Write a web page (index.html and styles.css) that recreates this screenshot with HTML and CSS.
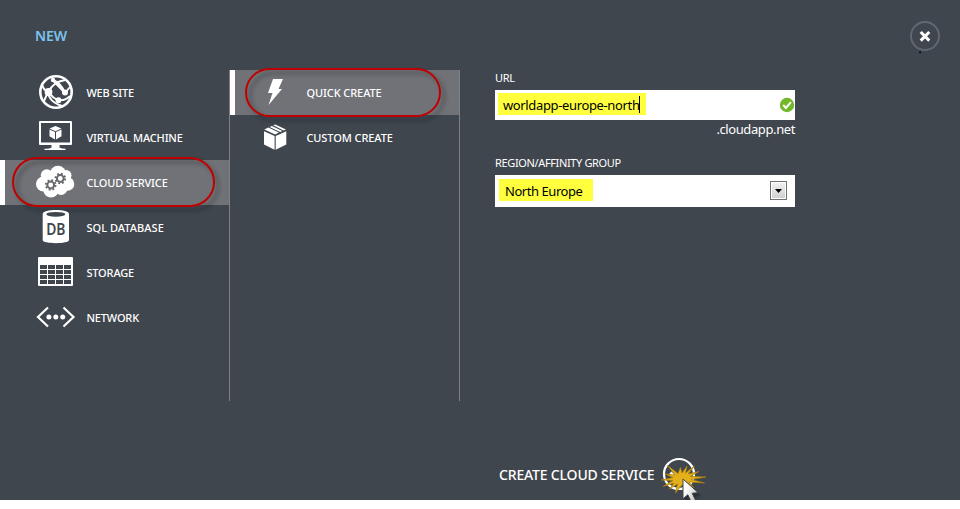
FILE: index.html
```html
<!DOCTYPE html>
<html lang="en">
<head>
<meta charset="utf-8">
<title>New</title>
<link rel="stylesheet" href="styles.css">
</head>
<body>
<main class="panel">
  <header class="head">
    <h1>NEW</h1>
    <button class="close" aria-label="Close"><svg width="32" height="34" viewBox="0 0 32 34"><circle cx="15" cy="16" r="14" fill="none" stroke="#626872" stroke-width="2"/><path d="M10.700 12l8.600 8.600M19.300 12l-8.600 8.600" stroke="#fff" stroke-width="3"/><path d="M9 31.600h2v1.700H9z" fill="#0b0d10"/></svg></button>
  </header>
  <div class="columns">
    <nav class="menu">
      <a class="item"><svg width="50" height="45" viewBox="0 0 50 45" fill="none" stroke="#fff">
        <circle cx="26" cy="22" r="15.700" stroke-width="2.600"/>
        <path d="M12 14Q13 20 18.500 22Q23 12 35 10M22 9.500Q31 13 35 23M18 22Q19 32 32 36M19 22Q23 29 29 30T40 26M22 9.500L35 23M35 23L40 17M18 22L14 31" stroke-width="1.900"/>
        <g fill="#fff" stroke="none"><circle cx="18.500" cy="22" r="3.900"/><circle cx="35" cy="22.500" r="3"/><circle cx="28.500" cy="30.200" r="3"/><circle cx="23" cy="10" r="2.200"/></g></svg><span>WEB SITE</span></a>
      <a class="item"><svg width="50" height="45" viewBox="0 0 50 45" fill="#fff">
        <path fill-rule="evenodd" d="M10 6h31q1 0 1 1v22q0 1-1 1H10q-1 0-1-1V7q0-1 1-1zM11 8v19.500h29V8z"/>
        <path d="M21.500 30h8v2.500q1.500 1.300 6 1.300V35h-21v-1.200q5.500 0 7-1.300z"/>
        <path d="M25.500 11l6 2.500-6 2.700-6-2.700zM19.500 14.600l5.500 2.500v7.400l-5.500-3.200zM31.500 14.600L26 17.100v7.400l5.500-3.200z"/></svg><span>VIRTUAL MACHINE</span></a>
      <a class="item selected"><svg width="50" height="45" viewBox="0 0 50 45">
        <g fill="#fff"><circle cx="13.500" cy="24" r="7.500"/><circle cx="16.800" cy="15.200" r="6"/><circle cx="28" cy="14" r="8.200"/><circle cx="36" cy="15.500" r="5.500"/><circle cx="37.500" cy="24" r="6.800"/><circle cx="31" cy="28.500" r="6.500"/><circle cx="21" cy="30" r="7.600"/><path d="M14 15h23v14H14z"/></g>
        <g fill="none" stroke="#65686d"><circle cx="20.700" cy="25" r="3.400" stroke-width="2"/><circle cx="20.700" cy="25" r="4.900" stroke-width="1.800" stroke-dasharray="1.900 1.948"/><circle cx="30.300" cy="18.500" r="3.400" stroke-width="2"/><circle cx="30.300" cy="18.500" r="4.900" stroke-width="1.800" stroke-dasharray="1.900 1.948"/></g></svg><span>CLOUD SERVICE</span><i class="ring ring-service"></i></a>
      <a class="item"><svg width="50" height="45" viewBox="0 0 50 45">
        <path d="M12.700 9v26c0 4.200 26.300 4.200 26.300 0V9c0-5.300-26.300-5.300-26.300 0z" fill="#fff"/><ellipse cx="25.800" cy="9.300" rx="9.500" ry="2.400" fill="#3f464e"/><text class="db" x="16.300" y="29.700" textLength="19" lengthAdjust="spacingAndGlyphs">DB</text></svg><span class="sql">SQL DATABASE</span></a>
      <a class="item"><svg width="50" height="45" viewBox="0 0 50 45">
        <rect x="8" y="7" width="35" height="29" rx="1" fill="#fff"/><path d="M10 17h31M10 22h31M10 27h31M10 32h31" stroke="#3f464e" stroke-width="4" stroke-dasharray="7 1" /></svg><span>STORAGE</span></a>
      <a class="item"><svg width="50" height="45" viewBox="0 0 50 45"><path d="M18 12.500L8 22l10 9.500M33.500 12.500l10 9.500-10 9.500" fill="none" stroke="#fff" stroke-width="2.200"/><g fill="#fff"><circle cx="18.900" cy="22" r="2.500"/><circle cx="25.800" cy="22" r="2.500"/><circle cx="32.700" cy="22" r="2.500"/></g></svg><span>NETWORK</span></a>
    </nav>
    <nav class="menu submenu">
      <a class="item selected"><svg width="40" height="45" viewBox="0 0 40 45"><path d="M13 9h10l-4.500 10H22L8.500 35l4-12H8z" fill="#fff"/></svg><span>QUICK CREATE</span><i class="ring ring-quick"></i></a>
      <a class="item"><svg width="40" height="45" viewBox="0 0 40 45" fill="#fff"><path d="M4 16.200l10.600 4.800v13.700L4 29.500zM26.300 16.200l-10.600 4.800v13.700l10.600-5.200zM4.300 14.600l4-2 10.600 5-3.700 2zM9.600 12l2.300-1.100 10.500 5-2.300 1.100zM13.200 10.300l2-.900 10.800 5.200-2.400 1z"/></svg><span>CUSTOM CREATE</span></a>
    </nav>
    <form class="form">
      <label class="url-label">URL</label>
      <div class="field"><span class="mark url">worldapp-europe-north</span><i class="caret"></i>
        <svg class="valid" width="16" height="16" viewBox="0 0 16 16"><circle cx="8" cy="8" r="7.200" fill="#73b72b"/><path d="M4.200 8l2.700 3 5-5.800" fill="none" stroke="#fff" stroke-width="2"/></svg></div>
      <div class="suffix"><span>.cloudapp.net</span></div>
      <label class="region-label">REGION/AFFINITY GROUP</label>
      <div class="field select"><span class="mark region">North Europe</span><span class="drop"><svg width="7" height="4" viewBox="0 0 7 4"><path d="M0 0h7L3.500 4z"/></svg></span></div>
    </form>
  </div>
  <footer class="foot"><span>CREATE CLOUD SERVICE</span>
    <svg class="confirm" width="50" height="54" viewBox="0 0 50 54">
      <defs><linearGradient id="arrow" x1="0" y1="0" x2="1" y2="1"><stop offset=".3" stop-color="#fff"/><stop offset="1" stop-color="#b5b5b5"/></linearGradient></defs>
      <circle cx="18" cy="19" r="15" fill="none" stroke="#fff" stroke-width="2.200"/><path d="M9.500 17.500l4.500 5" fill="none" stroke="#fff" stroke-width="3"/>
      <path d="M6.500 10.500L17 18.500 19.500 12.500 21 18 26 11 24.500 18 33.500 11 27 19 38 16.500 29 21.500 45 22 30 24.500 43.500 28 28 27 33 33 23 29 20 31 14.500 38 16.500 29 8.500 34 13 28 2 31.500 12 25.500 .5 25 12 22.500 4 19 14 20z" fill="#e3b019" stroke="#ab800d" stroke-width=".7"/>
      <path class="pointer" d="M22 24v19.800l4.800-4 4 8 4-2-3.600-7.600 6-.5z" fill="url(#arrow)" stroke="#444" stroke-width="1"/></svg></footer>
</main>
</body>
</html>
```
FILE: styles.css
```css
* { box-sizing: border-box; }
body { margin: 0; background: #fff; color: #fff; font-family: "Noto Sans", "Open Sans", sans-serif; }
.panel { height: 500px; background: #3f464e; display: flex; flex-direction: column; }
.head { height: 70px; padding: 20px 18px 0 35px; display: flex; justify-content: space-between; }
h1 { margin: 6px 0 0; font-size: 14px; line-height: 20px; font-weight: 600; letter-spacing: -.1px; color: #7bc2ec; }
.close { width: 32px; height: 34px; padding: 0; border: 0; background: none; }
.close svg { display: block; }
.columns { height: 331px; display: flex; }
.menu { width: 230px; border-right: 1px solid #7d8187; }
.item { height: 45px; padding-left: 30px; display: flex; align-items: center; position: relative; font-size: 11px; font-weight: 500; letter-spacing: -.15px; white-space: nowrap; }
.item svg { flex: none; margin-right: 6.4px; }
.item .sql { letter-spacing: .05px; }
.submenu .item { letter-spacing: -.08px; }
.item.selected { background: #707277; border-left: 5px solid #fff; padding-left: 25px; }
.ring { position: absolute; border: 2px solid #c00000; border-radius: 25px; filter: drop-shadow(4px 4px 2px rgba(0,0,0,.35)); }
.ring-service { left: 7px; top: -3px; width: 203px; height: 50px; }
.ring-quick { left: 10px; top: -2px; width: 196px; height: 49px; }
.db { font: 600 15.5px "Noto Sans", sans-serif; fill: #3f464e; }
.form { width: 300px; margin-left: 35px; font-size: 13px; }
.form label { display: block; font-size: 11px; line-height: 16px; letter-spacing: -.36px; }
.form .url-label { height: 20px; }
.field { height: 30px; background: #fff; color: #000; padding: 3px 0 0 3px; display: flex; align-items: flex-start; position: relative; }
.mark { height: 22px; line-height: 24px; background: #ffff3e; white-space: nowrap; }
.url { width: 148px; padding-left: 5px; letter-spacing: -.36px; }
.caret { position: absolute; left: 144px; top: 6px; width: 1px; height: 17px; background: #000; }
.valid { margin: 4px 0 0 auto; }
.suffix { height: 35px; line-height: 19px; text-align: right; letter-spacing: -.4px; }
.form .region-label { height: 20px; }
.select { height: 32px; padding: 4px 8px 0 4px; justify-content: space-between; }
.region { width: 94px; padding-left: 6px; letter-spacing: -.45px; }
.drop { width: 17px; height: 19px; margin-top: 2px; border: 1px solid #707070; background: linear-gradient(#f2f2f2, #cfcfcf); box-shadow: inset 0 0 0 1px #fff; display: flex; align-items: center; justify-content: center; }
.foot { margin-top: 54px; padding-left: 499px; height: 45px; display: flex; align-items: flex-start; font-size: 14px; font-weight: 500; letter-spacing: -.17px; }
.foot span { width: 162px; line-height: 20px; margin-top: 10px; white-space: nowrap; }
.confirm { flex: none; overflow: visible; }
.pointer { filter: drop-shadow(2px 3px 1px rgba(0,0,0,.35)); }
```
